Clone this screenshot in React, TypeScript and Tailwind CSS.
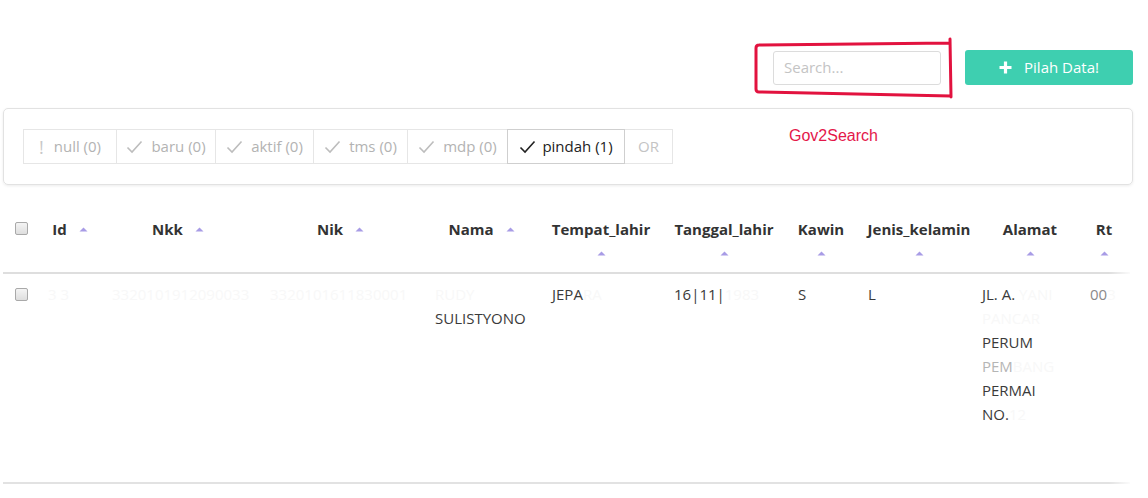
import React from "react";

const Arrow = () => (
  <svg width="9" height="5" viewBox="0 0 9 5" className="shrink-0">
    <path d="M0.5 4.5 L4.5 0.5 L8.5 4.5 Z" fill="#a89ce6" />
  </svg>
);

const Check = ({ color }: { color: string }) => (
  <svg width="17" height="14" viewBox="0 0 17 14" className="shrink-0">
    <path d="M1.5 7.5 L6 12 L15.5 1.5" fill="none" stroke={color} strokeWidth="1.6" />
  </svg>
);

const Box = () => (
  <div className="w-[13px] h-[13px] rounded-[2px] border border-[#a9a9a9] bg-gradient-to-b from-[#f4f4f4] to-[#dedede]" />
);

const Faint = ({ children }: { children: React.ReactNode }) => (
  <span className="text-[#f8f8f8]">{children}</span>
);

export default function App() {
  const segs = [
    { w: "w-[94px]", label: "null (0)", bang: true },
    { w: "w-[100px]", label: "baru (0)" },
    { w: "w-[99px]", label: "aktif (0)" },
    { w: "w-[95px]", label: "tms (0)" },
    { w: "w-[101px]", label: "mdp (0)" },
  ];
  return (
    <div className="relative w-[1148px] h-[498px] overflow-hidden bg-white font-['Open_Sans',sans-serif] text-[15px] text-[#333]">
      <div className="pl-[3px] pr-[15px] pt-[50px]">
        {/* toolbar */}
        <div className="flex justify-end items-center gap-[24px]">
          <div className="w-[168px] h-[34px] border border-[#dcdcdc] rounded-[3px] flex items-center pl-[10px] text-[#c4c4c4]">
            Search...
          </div>
          <div className="w-[168px] h-[35px] rounded-[3px] bg-[#3ecfb0] flex items-center justify-center gap-[12px] text-white">
            <svg width="13" height="13" viewBox="0 0 13 13">
              <path d="M6.5 0.5 V12.5 M0.5 6.5 H12.5" stroke="white" strokeWidth="3.2" />
            </svg>
            <span>Pilah Data!</span>
          </div>
        </div>

        {/* card */}
        <div className="mt-[23px] h-[77px] border border-[#e2e2e2] rounded-[5px] shadow-[0_1px_3px_rgba(0,0,0,0.08)] pl-[19px] pt-[20px]">
          <div className="flex h-[35px] text-[#b3b3b3]">
            {segs.map((s, i) => (
              <div
                key={i}
                className={`${s.w} h-[35px] border border-[#e6e6e6] ${i > 0 ? "-ml-px" : ""} flex items-center justify-center gap-[8px]`}
              >
                {s.bang ? (
                  <span className="text-[18px] leading-none text-[#c8c8c8] mr-[2px]">!</span>
                ) : (
                  <Check color="#bdbdbd" />
                )}
                <span>{s.label}</span>
              </div>
            ))}
            <div className="w-[118px] h-[35px] -ml-px border border-[#cfcfcf] flex items-center justify-center gap-[6px] text-[#222] relative">
              <Check color="#222" />
              <span>pindah (1)</span>
            </div>
            <div className="w-[49px] h-[35px] -ml-px border border-[#e6e6e6] flex items-center justify-center text-[#c4c4c4]">
              OR
            </div>
          </div>
        </div>

        {/* table */}
        <div className="relative mt-[15px]">
          <table className="table-fixed border-collapse w-[1127px]">
            <colgroup>
              <col className="w-[39px]" />
              <col className="w-[56px]" />
              <col className="w-[160px]" />
              <col className="w-[165px]" />
              <col className="w-[117px]" />
              <col className="w-[122px]" />
              <col className="w-[124px]" />
              <col className="w-[70px]" />
              <col className="w-[126px]" />
              <col className="w-[96px]" />
              <col className="w-[52px]" />
            </colgroup>
            <thead>
              <tr className="border-b-2 border-[#dedede] align-top font-bold text-[#333] leading-[24px]">
                <th className="pl-[12px] pt-[22px] h-[73px]">
                  <Box />
                </th>
                {["Id", "Nkk", "Nik", "Nama"].map((h) => (
                  <th key={h} className="px-3 pt-[17px]">
                    <div className="flex items-center justify-center gap-[12px]">
                      <span>{h}</span>
                      <Arrow />
                    </div>
                  </th>
                ))}
                {["Tempat_lahir", "Tanggal_lahir", "Kawin", "Jenis_kelamin", "Alamat", "Rt"].map((h) => (
                  <th key={h} className="px-3 pt-[17px]">
                    <div className="flex flex-col items-center">
                      <span className="whitespace-nowrap">{h}</span>
                      <div className="h-[24px] flex items-center">
                        <Arrow />
                      </div>
                    </div>
                  </th>
                ))}
              </tr>
            </thead>
            <tbody>
              <tr className="border-b-2 border-[#e2e2e2] align-top leading-[24px] text-[#3a3a3a]">
                <td className="pl-[12px] pt-[14px]">
                  <Box />
                </td>
                <td className="pl-[6px] pt-[8px] whitespace-nowrap">
                  <Faint>3 3</Faint>
                </td>
                <td className="pl-[14px] pt-[8px] whitespace-nowrap">
                  <Faint>3320101912090033</Faint>
                </td>
                <td className="pl-[12px] pt-[8px] whitespace-nowrap">
                  <Faint>3320101611830001</Faint>
                </td>
                <td className="pl-[12px] pt-[8px]">
                  <div>
                    <Faint>RUDY</Faint>
                  </div>
                  <div>SULISTYONO</div>
                </td>
                <td className="pl-[12px] pt-[8px]">
                  JEPA<Faint>RA</Faint>
                </td>
                <td className="pl-[12px] pt-[8px]">
                  16|11|<Faint>1983</Faint>
                </td>
                <td className="pl-[12px] pt-[8px]">S</td>
                <td className="pl-[12px] pt-[8px]">L</td>
                <td className="pl-0 pt-[8px] pb-[56px] whitespace-nowrap">
                  <div>
                    JL. A. <Faint>YANI</Faint>
                  </div>
                  <div>
                    <Faint>PANCAR</Faint>
                  </div>
                  <div>PERUM</div>
                  <div>
                    <span className="text-[#b5b5b5]">PEM</span>
                    <Faint>BANG</Faint>
                  </div>
                  <div>PERMAI</div>
                  <div>
                    NO.<Faint>12</Faint>
                  </div>
                </td>
                <td className="pl-[12px] pt-[8px] whitespace-nowrap">
                  <span className="text-[#8a8a8a]">00</span>
                  <Faint>3</Faint>
                </td>
              </tr>
            </tbody>
          </table>
          <div className="absolute top-0 right-0 w-[24px] h-[300px] bg-gradient-to-r from-white/0 to-white" />
        </div>
      </div>

      {/* annotations */}
      <div className="absolute left-[789px] top-[124px] font-['Liberation_Sans',Arial,sans-serif] text-[16px] text-[#e4174a]">
        Gov2Search
      </div>
      <svg className="absolute left-0 top-0 pointer-events-none" width="1148" height="498">
        <path
          d="M759 45 L950 43 M950 39 L951 97 M951 96 L759 92 Q756 92 756 89 L756 48 Q756 45 759 45"
          fill="none"
          stroke="#e2123f"
          strokeWidth="3"
          strokeLinecap="round"
        />
      </svg>
    </div>
  );
}
